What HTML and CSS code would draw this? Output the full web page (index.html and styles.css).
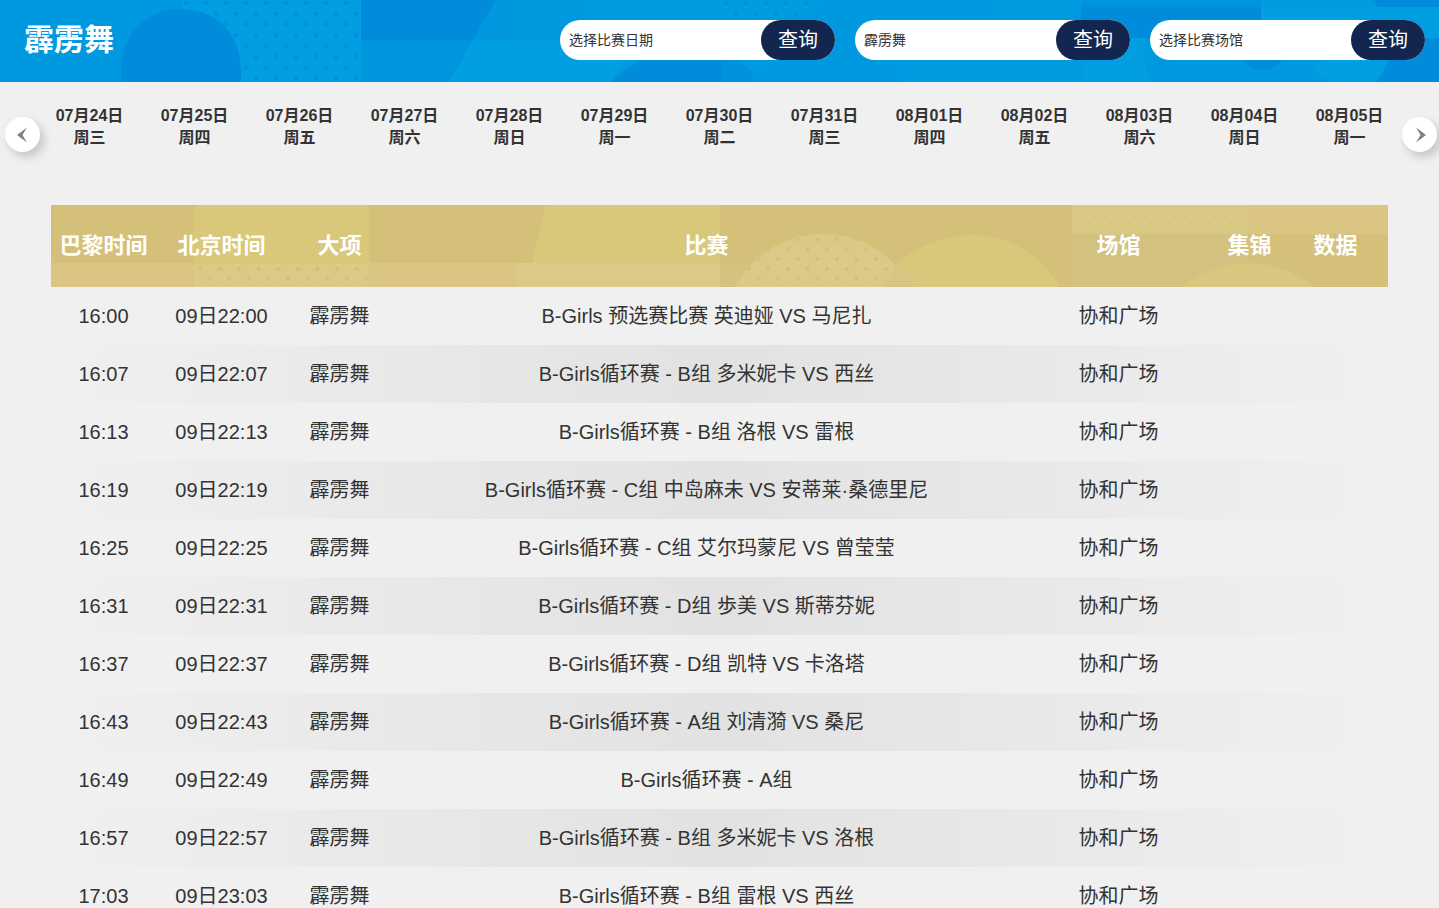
FILE: index.html
```html
<!DOCTYPE html>
<html lang="zh-CN">
<head>
<meta charset="utf-8">
<meta name="viewport" content="width=device-width, initial-scale=1">
<title>霹雳舞</title>
<link rel="stylesheet" href="styles.css">
</head>
<body>
<header class="banner">
  <svg class="banner-art" viewBox="0 0 1439 82" preserveAspectRatio="none" aria-hidden="true">
    <defs>
      <pattern id="blueDots" x="181" y="-2" width="20" height="21.5" patternUnits="userSpaceOnUse">
        <circle cx="5" cy="5" r="2.3" fill="#0091dc"/>
        <circle cx="15" cy="15.75" r="2.3" fill="#0091dc"/>
      </pattern>
      <linearGradient id="fade" x1="0" x2="1" y1="0" y2="0"><stop offset="0" stop-color="#0097dd"/><stop offset="1" stop-color="#009bdf"/></linearGradient>
    </defs>
    <rect width="1439" height="82" fill="#0098de"/>
    <rect x="181" width="180" height="82" fill="#019ee1"/>
    <rect x="181" width="180" height="82" fill="url(#blueDots)"/>
    <path d="M121 82V70C122 30 150 9 181 9S240 30 241 70V82Z" fill="#018cdb"/>
    <path d="M361 0H496L473 40H361Z" fill="#018cdb"/>
    <path d="M361 40H473L449 82H361Z" fill="#0096de"/>
    <path d="M496 0H721V82H449Z" fill="url(#fade)"/>
    <path d="M473 40H640L610 82H449Z" fill="#019ee1"/>
    <path d="M610 82L640 60H721V82Z" fill="#018cdb"/>
    <path d="M721 60H752V82H721Z" fill="#0092dc"/>
    <path d="M721 0H822L760 70H748Q725 40 721 0Z" fill="#019ce0"/>
    <path d="M721 0H822L806 18H724Z" fill="url(#blueDots)"/>
    <rect x="902" y="71" width="150" height="11" fill="#019ce0"/>
    <path d="M990 0H1081V20H1004Z" fill="#019adf"/>
    <path d="M1081 0H1261V7H1081Z" fill="#0094dd"/>
    <path d="M1081 7H1261V38H1081Z" fill="#018cdb"/>
    <path d="M1052 70L1062 60H1081V82H1042Z" fill="#019ce0"/>
    <path d="M1081 38H1145Q1142 62 1151 82H1085Q1081 62 1081 38Z" fill="#019ee1"/>
    <path d="M1240 58Q1262 82 1285 58Z" fill="#018cdb"/>
    <path d="M1261 0H1374L1378 7H1261Z" fill="#019adf"/>
    <path d="M1261 7H1439V38H1261Z" fill="#019ee1"/>
    <path d="M1374 0H1439V7H1378Z" fill="#018cdb"/>
    <path d="M1322 58H1389Q1385 72 1376 82H1333L1313 71Z" fill="#019ee1"/>
    <path d="M1393 38H1439V82H1376Q1390 66 1393 38Z" fill="#018cdb"/>
  </svg>
  <h1 class="title">霹雳舞</h1>
  <div class="filters">
    <form class="filter">
      <select class="filter-select" aria-label="比赛日期"><option>选择比赛日期</option></select>
      <button class="filter-button" type="button">查询</button>
    </form>
    <form class="filter">
      <select class="filter-select" aria-label="比赛项目"><option>霹雳舞</option></select>
      <button class="filter-button" type="button">查询</button>
    </form>
    <form class="filter">
      <select class="filter-select" aria-label="比赛场馆"><option>选择比赛场馆</option></select>
      <button class="filter-button" type="button">查询</button>
    </form>
  </div>
</header>

<nav class="dates" aria-label="比赛日期">
  <button class="arrow arrow-prev" type="button" aria-label="前一页">
    <svg class="arrow-icon" viewBox="0 0 12 16" aria-hidden="true"><path d="M10 .5L0 8L10 15.5L5.4 8Z" fill="#808080"/></svg>
  </button>
  <ul class="date-list">
    <li><a class="date" href="#">07月24日<br>周三</a></li>
    <li><a class="date" href="#">07月25日<br>周四</a></li>
    <li><a class="date" href="#">07月26日<br>周五</a></li>
    <li><a class="date" href="#">07月27日<br>周六</a></li>
    <li><a class="date" href="#">07月28日<br>周日</a></li>
    <li><a class="date" href="#">07月29日<br>周一</a></li>
    <li><a class="date" href="#">07月30日<br>周二</a></li>
    <li><a class="date" href="#">07月31日<br>周三</a></li>
    <li><a class="date" href="#">08月01日<br>周四</a></li>
    <li><a class="date" href="#">08月02日<br>周五</a></li>
    <li><a class="date" href="#">08月03日<br>周六</a></li>
    <li><a class="date" href="#">08月04日<br>周日</a></li>
    <li><a class="date" href="#">08月05日<br>周一</a></li>
  </ul>
  <button class="arrow arrow-next" type="button" aria-label="后一页">
    <svg class="arrow-icon" viewBox="0 0 12 16" aria-hidden="true"><path d="M2 .5L12 8L2 15.5L6.6 8Z" fill="#808080"/></svg>
  </button>
</nav>

<main class="schedule">
  <svg class="schedule-art" viewBox="0 0 1337 82" preserveAspectRatio="none" aria-hidden="true">
    <defs>
      <pattern id="goldDots" x="144" y="59" width="19.6" height="19.6" patternUnits="userSpaceOnUse">
        <circle cx="4.9" cy="4.9" r="2" fill="#d0bf78"/>
        <circle cx="14.7" cy="14.7" r="2" fill="#d0bf78"/>
      </pattern>
      <pattern id="fineDots" x="1021" y="-1" width="10" height="10" patternUnits="userSpaceOnUse">
        <circle cx="3" cy="3" r="1.1" fill="#d2c07a"/>
        <circle cx="8" cy="8" r="1.1" fill="#d2c07a"/>
      </pattern>
    </defs>
    <rect width="1337" height="82" fill="#d4c079"/>
    <rect y="58" width="484" height="24" fill="#dac682"/>
    <rect x="143" width="175" height="82" fill="#dac87a"/>
    <rect x="143" y="58" width="175" height="24" fill="#dbc985"/>
    <rect x="143" y="60" width="175" height="22" fill="url(#goldDots)"/>
    <path d="M495 0H669V58H481Z" fill="#dac87a"/>
    <rect x="465" y="58" width="204" height="24" fill="#dbca87"/>
    <path d="M669 58H705Q691 69 685 82H669Z" fill="#d4c27e"/>
    <circle cx="772" cy="129" r="100" fill="#dbca87"/>
    <circle cx="772" cy="129" r="100" fill="url(#goldDots)"/>
    <path d="M846 58Q882 30 921 30Q980 32 1009 82H832Z" fill="#dac87a"/>
    <path d="M846 58L866 82H832Z" fill="#d6c584"/>
    <rect x="1021" width="175" height="82" fill="#d3c27f"/>
    <rect x="1021" width="175" height="29" fill="#dac985"/>
    <rect x="1021" width="175" height="29" fill="url(#fineDots)"/>
    <rect x="1196" width="141" height="29" fill="#dac682"/>
    <circle cx="1197" cy="163" r="105" fill="#d9c67f"/>
  </svg>
  <table class="matches">
    <colgroup><col class="col-paris"><col class="col-beijing"><col class="col-sport"><col class="col-match"><col class="col-venue"><col class="col-video"><col class="col-data"></colgroup>
    <thead>
      <tr><th>巴黎时间</th><th>北京时间</th><th>大项</th><th>比赛</th><th>场馆</th><th>集锦</th><th>数据</th></tr>
    </thead>
    <tbody>
      <tr><td>16:00</td><td>09日22:00</td><td>霹雳舞</td><td>B-Girls 预选赛比赛 英迪娅 VS 马尼扎</td><td>协和广场</td><td></td><td></td></tr>
      <tr><td>16:07</td><td>09日22:07</td><td>霹雳舞</td><td>B-Girls循环赛 - B组 多米妮卡 VS 西丝</td><td>协和广场</td><td></td><td></td></tr>
      <tr><td>16:13</td><td>09日22:13</td><td>霹雳舞</td><td>B-Girls循环赛 - B组 洛根 VS 雷根</td><td>协和广场</td><td></td><td></td></tr>
      <tr><td>16:19</td><td>09日22:19</td><td>霹雳舞</td><td>B-Girls循环赛 - C组 中岛麻未 VS 安蒂莱·桑德里尼</td><td>协和广场</td><td></td><td></td></tr>
      <tr><td>16:25</td><td>09日22:25</td><td>霹雳舞</td><td>B-Girls循环赛 - C组 艾尔玛蒙尼 VS 曾莹莹</td><td>协和广场</td><td></td><td></td></tr>
      <tr><td>16:31</td><td>09日22:31</td><td>霹雳舞</td><td>B-Girls循环赛 - D组 歩美 VS 斯蒂芬妮</td><td>协和广场</td><td></td><td></td></tr>
      <tr><td>16:37</td><td>09日22:37</td><td>霹雳舞</td><td>B-Girls循环赛 - D组 凯特 VS 卡洛塔</td><td>协和广场</td><td></td><td></td></tr>
      <tr><td>16:43</td><td>09日22:43</td><td>霹雳舞</td><td>B-Girls循环赛 - A组 刘清漪 VS 桑尼</td><td>协和广场</td><td></td><td></td></tr>
      <tr><td>16:49</td><td>09日22:49</td><td>霹雳舞</td><td>B-Girls循环赛 - A组</td><td>协和广场</td><td></td><td></td></tr>
      <tr><td>16:57</td><td>09日22:57</td><td>霹雳舞</td><td>B-Girls循环赛 - B组 多米妮卡 VS 洛根</td><td>协和广场</td><td></td><td></td></tr>
      <tr><td>17:03</td><td>09日23:03</td><td>霹雳舞</td><td>B-Girls循环赛 - B组 雷根 VS 西丝</td><td>协和广场</td><td></td><td></td></tr>
    </tbody>
  </table>
</main>
</body>
</html>
```

FILE: styles.css
```css
* {
  box-sizing: border-box;
}

body {
  margin: 0;
  background: #f0f0f0;
  color: #333;
  font-family: "Liberation Sans", "Noto Sans CJK SC", sans-serif;
  overflow-x: hidden;
}

button,
select {
  font-family: inherit;
  border: 0;
  margin: 0;
}

/* Banner */
.banner {
  position: relative;
  display: flex;
  align-items: center;
  justify-content: space-between;
  padding: 20px 14px 22px 24px;
}

.banner-art {
  position: absolute;
  inset: 0;
  width: 100%;
  height: 100%;
  z-index: -1;
}

.title {
  margin: 0;
  color: #fff;
  font-size: 30px;
  line-height: 40px;
}

.filters {
  display: flex;
  gap: 20px;
}

.filter {
  display: flex;
  width: 275px;
  border-radius: 20px;
  background: #fff;
}

.filter-select {
  appearance: none;
  flex: 1;
  min-width: 0;
  padding: 0 9px;
  background: transparent;
  color: #333;
  font-size: 14px;
}

.filter-button {
  width: 74px;
  height: 40px;
  padding: 0;
  border-radius: 20px;
  background: #12264f;
  color: #fff;
  font-size: 20px;
  line-height: 40px;
}

/* Date carousel */
.dates {
  position: relative;
  padding: 23px 37px 56px;
}

.date-list {
  display: grid;
  grid-template-columns: repeat(13, 1fr);
  margin: 0;
  padding: 0;
  list-style: none;
}

.date {
  display: block;
  color: #333;
  font-size: 16px;
  font-weight: bold;
  line-height: 22px;
  text-align: center;
  text-decoration: none;
}

.arrow {
  position: absolute;
  top: 35px;
  display: grid;
  place-items: center;
  width: 35px;
  height: 35px;
  padding: 0;
  border-radius: 50%;
  background: #fff;
  box-shadow: 4px 5px 10px rgba(0, 0, 0, 0.18);
}

.arrow-prev {
  left: 5px;
}

.arrow-next {
  right: 2px;
}

.arrow-icon {
  width: 12px;
  height: 16px;
}

/* Schedule */
.schedule {
  position: relative;
  margin: 0 51px;
}

.schedule-art {
  position: absolute;
  top: 0;
  left: 0;
  width: 100%;
  height: 82px;
  z-index: -1;
}

.matches {
  width: 100%;
  table-layout: fixed;
  border-collapse: collapse;
  text-align: center;
}

.col-paris,
.col-sport,
.col-data {
  width: 105px;
}

.col-beijing {
  width: 131px;
}

.col-venue {
  width: 195px;
}

.col-video {
  width: 67px;
}

.matches th {
  height: 82px;
  padding: 0 0 6px;
  color: #fff;
  font-size: 22px;
}

.matches td {
  height: 58px;
  padding: 0;
  font-size: 20px;
  line-height: 28px;
}

.matches tbody tr:nth-child(even) {
  background: linear-gradient(90deg, #f0f0f0, #e2e2e2 50%, #f0f0f0);
}
```
